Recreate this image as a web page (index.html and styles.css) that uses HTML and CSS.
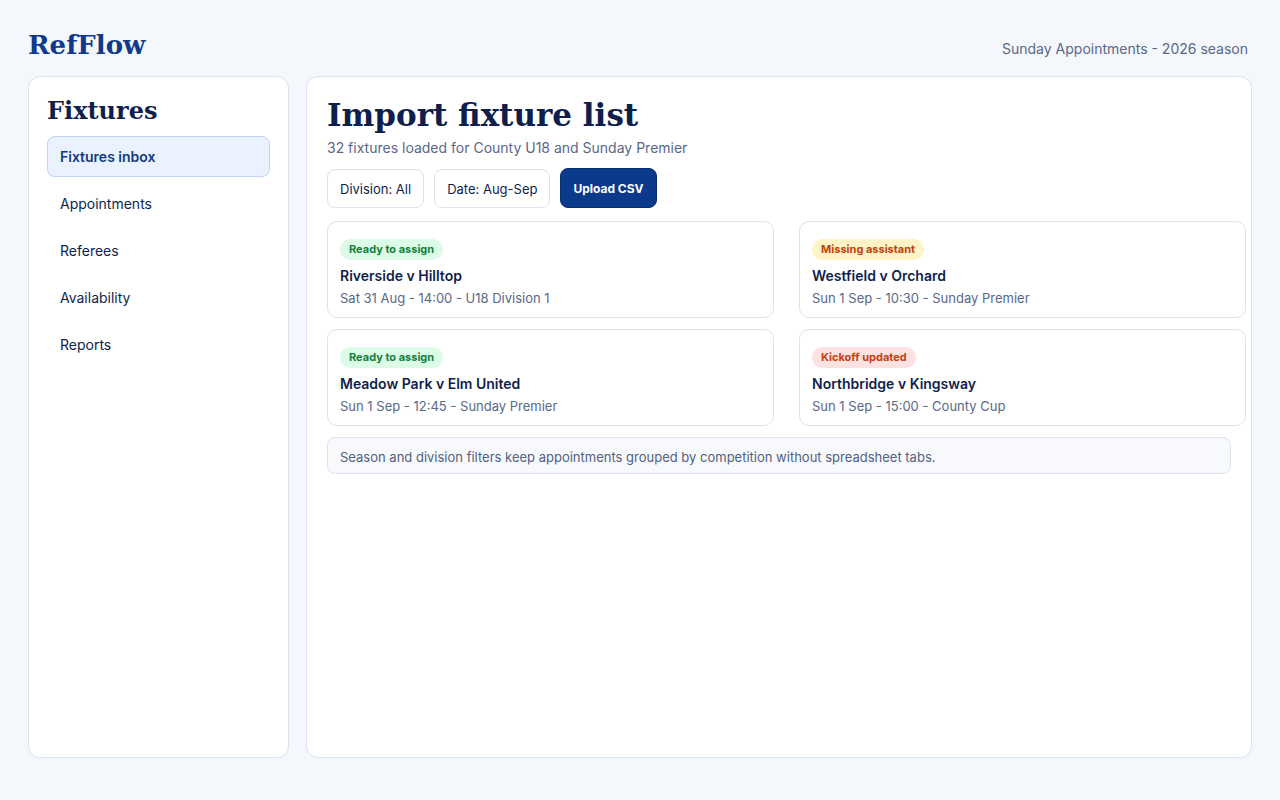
FILE: index.html
```html
<!DOCTYPE html>
<html lang="en">
<head>
  <meta charset="UTF-8" />
  <title>RefFlow - Import fixture list</title>
  <link rel="stylesheet" href="styles.css">
</head>
<body>
  <div class="app">
    <header class="topbar">
      <div class="brand">RefFlow</div>
      <div class="season">Sunday Appointments - 2026 season</div>
    </header>

    <div class="layout">
      <!-- Sidebar -->
      <aside class="sidebar">
        <h2>Fixtures</h2>
        <nav class="nav">
          <a href="#" class="nav-item active">Fixtures inbox</a>
          <a href="#" class="nav-item">Appointments</a>
          <a href="#" class="nav-item">Referees</a>
          <a href="#" class="nav-item">Availability</a>
          <a href="#" class="nav-item">Reports</a>
        </nav>
      </aside>

      <!-- Main -->
      <main class="panel">
        <h1>Import fixture list</h1>
        <p class="subtitle">32 fixtures loaded for County U18 and Sunday Premier</p>

        <div class="toolbar">
          <button class="chip">Division: All</button>
          <button class="chip">Date: Aug-Sep</button>
          <button class="primary">Upload CSV</button>
        </div>

        <div class="fixtures">
          <div class="card">
            <span class="badge ready">Ready to assign</span>
            <div class="match">Riverside v Hilltop</div>
            <div class="meta">Sat 31 Aug - 14:00 - U18 Division 1</div>
          </div>
          <div class="card">
            <span class="badge missing">Missing assistant</span>
            <div class="match">Westfield v Orchard</div>
            <div class="meta">Sun 1 Sep - 10:30 - Sunday Premier</div>
          </div>
          <div class="card">
            <span class="badge ready">Ready to assign</span>
            <div class="match">Meadow Park v Elm United</div>
            <div class="meta">Sun 1 Sep - 12:45 - Sunday Premier</div>
          </div>
          <div class="card">
            <span class="badge updated">Kickoff updated</span>
            <div class="match">Northbridge v Kingsway</div>
            <div class="meta">Sun 1 Sep - 15:00 - County Cup</div>
          </div>
        </div>

        <div class="note">Season and division filters keep appointments grouped by competition without spreadsheet tabs.</div>
      </main>
    </div>
  </div>
</body>
</html>
```

FILE: styles.css
```css
* {
  box-sizing: border-box;
}

body {
  margin: 0;
  font-family: 'Inter', 'Noto Sans', sans-serif;
  background-color: #f4f7fb;
  color: #0f1f4d;
}

.app {
  padding: 28px 28px 42px 28px;
  height: 800px;
  display: flex;
  flex-direction: column;
}

.topbar {
  display: flex;
  justify-content: space-between;
  align-items: flex-end;
  height: 48px;
  padding-right: 4px;
}

.brand {
  font-family: 'DejaVu Serif', serif;
  font-weight: bold;
  font-size: 26px;
  color: #0f3a8c;
  line-height: 32px;
  margin-bottom: 15px;
}

.season {
  font-size: 14px;
  color: #5a6888;
  line-height: 18px;
  margin-bottom: 18px;
}

.layout {
  flex: 1;
  display: flex;
  gap: 17px;
  min-height: 0;
}

.sidebar {
  width: 261px;
  flex-shrink: 0;
  background: white;
  border: 1px solid #dbe3ef;
  border-radius: 12px;
  padding: 18px 18px;
}

.sidebar h2 {
  font-family: 'DejaVu Serif', serif;
  font-size: 24px;
  margin: 0 0 9px 0;
  line-height: 32px;
  color: #0f1f4d;
}

.nav {
  display: flex;
  flex-direction: column;
  gap: 6px;
}

.nav-item {
  display: block;
  height: 41px;
  line-height: 39px;
  padding: 0 12px;
  border: 1px solid transparent;
  border-radius: 8px;
  font-size: 14px;
  color: #0f1f4d;
  text-decoration: none;
}

.nav-item.active {
  background: #eaf2ff;
  border-color: #bfd3f5;
  color: #133a7c;
  font-weight: 600;
}

.panel {
  flex: 1;
  min-width: 0;
  background: white;
  border: 1px solid #dbe3ef;
  border-radius: 12px;
  padding: 18px 20px;
}

.panel h1 {
  font-family: 'DejaVu Serif', serif;
  font-size: 31px;
  line-height: 40px;
  margin: 0;
  color: #0f1f4d;
}

.subtitle {
  font-size: 14px;
  color: #5a6888;
  margin: 4px 0 12px 0;
  line-height: 18px;
}

.toolbar {
  display: flex;
  gap: 10px;
  margin-bottom: 13px;
}

.chip {
  font-family: inherit;
  font-size: 13px;
  height: 39px;
  padding: 0 12px;
  background: white;
  border: 1px solid #dbe3ef;
  border-radius: 8px;
  color: #0f1f4d;
  cursor: pointer;
}

.primary {
  font-family: inherit;
  font-size: 12px;
  font-weight: bold;
  height: 40px;
  padding: 0 12px;
  background: #0b3a8c;
  color: white;
  border: 1px solid #082e70;
  border-radius: 8px;
  cursor: pointer;
  margin-top: -1px;
}

.fixtures {
  display: grid;
  grid-template-columns: 447px 447px;
  column-gap: 25px;
  row-gap: 11px;
  margin-bottom: 11px;
}

.card {
  border: 1px solid #dbe3ef;
  border-radius: 10px;
  padding: 15px 12px 10px 12px;
  height: 97px;
}

.badge {
  display: inline-block;
  font-size: 11px;
  font-weight: bold;
  line-height: 21px;
  padding: 0 9px;
  border-radius: 11px;
}

.badge.ready {
  background: #dcfce7;
  color: #15803d;
}

.badge.missing {
  background: #fef3c7;
  color: #c2410c;
}

.badge.updated {
  background: #fee2e2;
  color: #c2410c;
}

.match {
  font-size: 14px;
  font-weight: 600;
  margin-top: 6px;
  line-height: 20px;
}

.meta {
  font-size: 13px;
  color: #5a6888;
  margin-top: 3px;
  line-height: 18px;
}

.note {
  width: 904px;
  background: #f7f9fd;
  border: 1px solid #dbe3ef;
  border-radius: 8px;
  padding: 0 12px;
  height: 37px;
  line-height: 38px;
  font-size: 13px;
  color: #52617f;
}
```
